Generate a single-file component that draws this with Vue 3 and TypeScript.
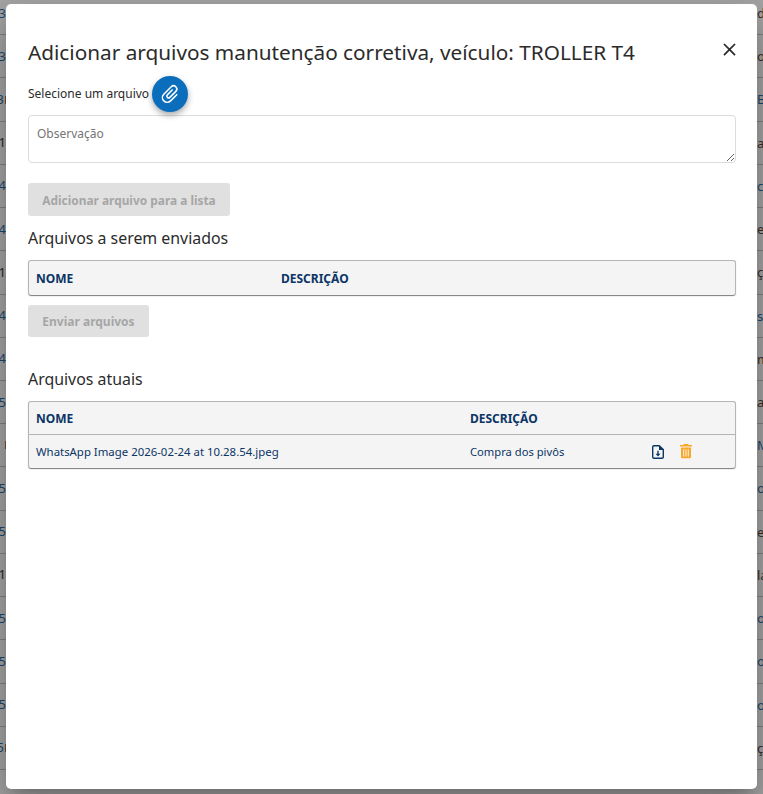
<template>
  <div class="page">
    <div class="bg-rows">
      <div v-for="(row, i) in rows" :key="i" class="bg-row">
        <span class="cell-left" :class="row.lc">{{ row.l }}<i v-if="row.mark" class="mark"></i></span>
        <span class="cell-right" :class="row.rc">{{ row.r }}</span>
      </div>
    </div>
    <div class="backdrop"></div>

    <div class="modal">
      <header class="modal-head">
        <h2>Adicionar arquivos manutenção corretiva, veículo: TROLLER T4</h2>
        <button class="close" aria-label="Fechar">
          <svg viewBox="0 0 24 24" width="21" height="21"><path d="M19,6.41L17.59,5L12,10.59L6.41,5L5,6.41L10.59,12L5,17.59L6.41,19L12,13.41L17.59,19L19,17.59L13.41,12L19,6.41Z" /></svg>
        </button>
      </header>

      <div class="file-pick">
        <span>Selecione um arquivo</span>
        <button class="fab" aria-label="Anexar">
          <svg viewBox="0 0 24 24" width="24" height="24"><path transform="rotate(-45 12 12)" d="M7.5,18A5.5,5.5 0 0,1 2,12.5A5.5,5.5 0 0,1 7.5,7H18A4,4 0 0,1 22,11A4,4 0 0,1 18,15H9.5A2.5,2.5 0 0,1 7,12.5A2.5,2.5 0 0,1 9.5,10H17V11.5H9.5A1,1 0 0,0 8.5,12.5A1,1 0 0,0 9.5,13.5H18A2.5,2.5 0 0,0 20.5,11A2.5,2.5 0 0,0 18,8.5H7.5A4,4 0 0,0 3.5,12.5A4,4 0 0,0 7.5,16.5H17V18H7.5Z" /></svg>
        </button>
      </div>

      <textarea class="obs" placeholder="Observação"></textarea>

      <button class="btn btn-add" disabled>Adicionar arquivo para a lista</button>

      <h3 class="sec-send">Arquivos a serem enviados</h3>
      <div class="tbl tbl-send">
        <div class="tr th">
          <span class="c1">NOME</span>
          <span>DESCRIÇÃO</span>
        </div>
      </div>

      <button class="btn btn-send" disabled>Enviar arquivos</button>

      <h3 class="sec-current">Arquivos atuais</h3>
      <div class="tbl tbl-current">
        <div class="tr th">
          <span class="c2">NOME</span>
          <span>DESCRIÇÃO</span>
        </div>
        <div class="tr td">
          <span class="c2">WhatsApp Image 2026-02-24 at 10.28.54.jpeg</span>
          <span class="c3">Compra dos pivôs</span>
          <svg class="ic-down" viewBox="0 0 14 16" width="14" height="16"><path fill-rule="evenodd" d="M3 1h5.500L13 5.200V13a2 2 0 0 1-2 2H3a2 2 0 0 1-2-2V3a2 2 0 0 1 2-2Zm0 1.400a.6.6 0 0 0-.6.6v10c0 .3.3.6.6.6h8c.3 0 .6-.3.6-.6V6H8V2.400H3Z" /><path d="M6.300 6.800h1.400v3h1.800L7 12.400 4.500 9.800h1.800Z" /></svg>
          <svg class="ic-trash" viewBox="0 0 14 16" width="14" height="16"><path fill-rule="evenodd" d="M5 1h4l.6 1H13v1.400H1V2h3.400L5 1ZM2 4.400h10V14a1.300 1.300 0 0 1-1.300 1.300H3.300A1.300 1.300 0 0 1 2 14V4.400Zm2.200 1.800v7.300h1V6.200h-1Zm2.300 0v7.300h1V6.200h-1Zm2.300 0v7.300h1V6.200h-1Z" /></svg>
        </div>
      </div>
    </div>
  </div>
</template>

<script setup lang="ts">
interface BgRow {
  l: string
  r: string
  lc?: string
  rc?: string
  mark?: boolean
}

const rows: BgRow[] = [
  { l: '3', r: 'd' },
  { l: '3', r: 'o' },
  { l: '3', r: 'B', rc: 'blue', mark: true },
  { l: '1', r: 'a', lc: 'dark' },
  { l: '4', r: 'c', rc: 'blue' },
  { l: '4', r: 'e' },
  { l: '1', r: 'ç', lc: 'dark' },
  { l: '4', r: 's', rc: 'blue' },
  { l: '4', r: 'm' },
  { l: '5', r: 'a' },
  { l: '', r: 'M', rc: 'blue', mark: true },
  { l: '5', r: 'o', rc: 'blue' },
  { l: '5', r: 'ei' },
  { l: '1', r: 'la', lc: 'dark' },
  { l: '5', r: 'o', rc: 'blue' },
  { l: '5', r: 'o', rc: 'blue' },
  { l: '5', r: 'o', rc: 'blue' },
  { l: '5', r: 'ç', mark: true }
]
</script>

<style>
html,
body {
  margin: 0;
  overflow: hidden;
}
</style>

<style scoped>
.page {
  position: relative;
  width: 763px;
  height: 794px;
  overflow: hidden;
  background: #fff;
  font-family: "Noto Sans", "Liberation Sans", sans-serif;
}

.bg-rows {
  margin-top: -8px;
}

.bg-row {
  display: flex;
  justify-content: space-between;
  box-sizing: border-box;
  height: 43.22px;
  line-height: 43px;
  font-size: 13px;
  border-bottom: 1px solid #c4c4c4;
  color: #4a3a30;
}

.cell-left {
  display: flex;
  align-items: center;
  justify-content: flex-end;
  width: 6px;
  overflow: hidden;
  color: #1565a8;
}

.mark {
  flex: none;
  width: 1px;
  height: 8px;
  margin-left: 1px;
  background: #b5713a;
}

.cell-right {
  width: 6px;
  overflow: hidden;
  white-space: nowrap;
}

.cell-left.dark {
  color: #2a2a2a;
}

.cell-right.blue {
  color: #1565a8;
}

.backdrop {
  position: absolute;
  inset: 0;
  background: rgba(33, 33, 33, 0.4);
}

.modal {
  position: absolute;
  left: 6px;
  top: 4px;
  box-sizing: border-box;
  width: 751px;
  height: 785px;
  padding: 0 21px 0 22px;
  background: #fff;
  border-radius: 5px;
  box-shadow: 0 11px 15px -7px rgba(0, 0, 0, 0.2), 0 24px 38px 3px rgba(0, 0, 0, 0.14), 0 9px 46px 8px rgba(0, 0, 0, 0.12);
  color: #2b2b2b;
}

.modal-head {
  display: flex;
  justify-content: space-between;
  align-items: center;
  height: 62px;
  padding-top: 24px;
  margin-top: -4px;
}

.modal-head h2 {
  margin: -6px 0 0;
  font-size: 20.75px;
  font-weight: 400;
  white-space: nowrap;
}

.close {
  display: flex;
  border: 0;
  padding: 0;
  background: none;
  margin-right: -4px;
  margin-top: -11px;
}

.close path {
  fill: #2b2b2b;
}

.file-pick {
  display: flex;
  align-items: center;
  gap: 3px;
  height: 36px;
  margin-top: -10px;
  font-size: 12px;
}

.file-pick span {
  margin-bottom: 2px;
}

.fab {
  display: flex;
  align-items: center;
  justify-content: center;
  width: 36px;
  height: 36px;
  padding: 0;
  border: 0;
  border-radius: 50%;
  background: #0a6ebd;
  box-shadow: 0 3px 6px rgba(0, 0, 0, 0.35);
}

.fab path {
  fill: #fff;
}

.obs {
  display: block;
  box-sizing: border-box;
  width: 708px;
  height: 48px;
  margin-top: 3px;
  padding: 9px 8px;
  border: 1px solid #dcdcdc;
  border-radius: 4px;
  outline: 0;
  font: 12px "Noto Sans", "Liberation Sans", sans-serif;
}

.obs::placeholder {
  color: #757575;
  opacity: 1;
}

.btn {
  display: block;
  padding: 0;
  border: 0;
  border-radius: 3px;
  background: #e0e0e0;
  color: #a6a6a6;
  font: 700 12px "Noto Sans", "Liberation Sans", sans-serif;
}

.btn-add {
  width: 202px;
  height: 33px;
  margin-top: 20px;
  font-size: 11.9px;
}

.btn-send {
  width: 121px;
  height: 32px;
  margin-top: 10px;
}

h3 {
  margin: 0;
  font-size: 15.9px;
  font-weight: 400;
  line-height: 20px;
}

.sec-send {
  margin-top: 12px;
}

.sec-current {
  margin-top: 32px;
}

.tbl {
  width: 708px;
  box-sizing: border-box;
  background: #f4f4f4;
  border: 1px solid #b5b5b5;
  border-bottom: 0;
  border-radius: 3px;
  box-shadow: 0 2px 1px -1px rgba(0, 0, 0, 0.3), 0 1px 1px rgba(0, 0, 0, 0.3);
  font-size: 12px;
  color: #0b3566;
}

.tbl-send {
  margin-top: 12px;
}

.tbl-send .th {
  height: 34px;
}

.tbl-current {
  margin-top: 12px;
}

.tr {
  display: flex;
  align-items: center;
  box-sizing: border-box;
  padding-left: 7px;
}

.th {
  height: 33px;
  padding-top: 1px;
  font-weight: 700;
}

.tbl-current .th {
  border-bottom: 1px solid #b5b5b5;
}

.td {
  height: 33px;
  font-size: 11.4px;
}

.c1 {
  width: 245px;
}

.c2 {
  width: 434px;
}

.c3 {
  width: 181px;
  font-size: 11.2px;
}

.ic-down {
  fill: #0b3566;
}

.ic-trash {
  margin-left: 14px;
  margin-top: -1px;
  fill: #f9a825;
}
</style>
